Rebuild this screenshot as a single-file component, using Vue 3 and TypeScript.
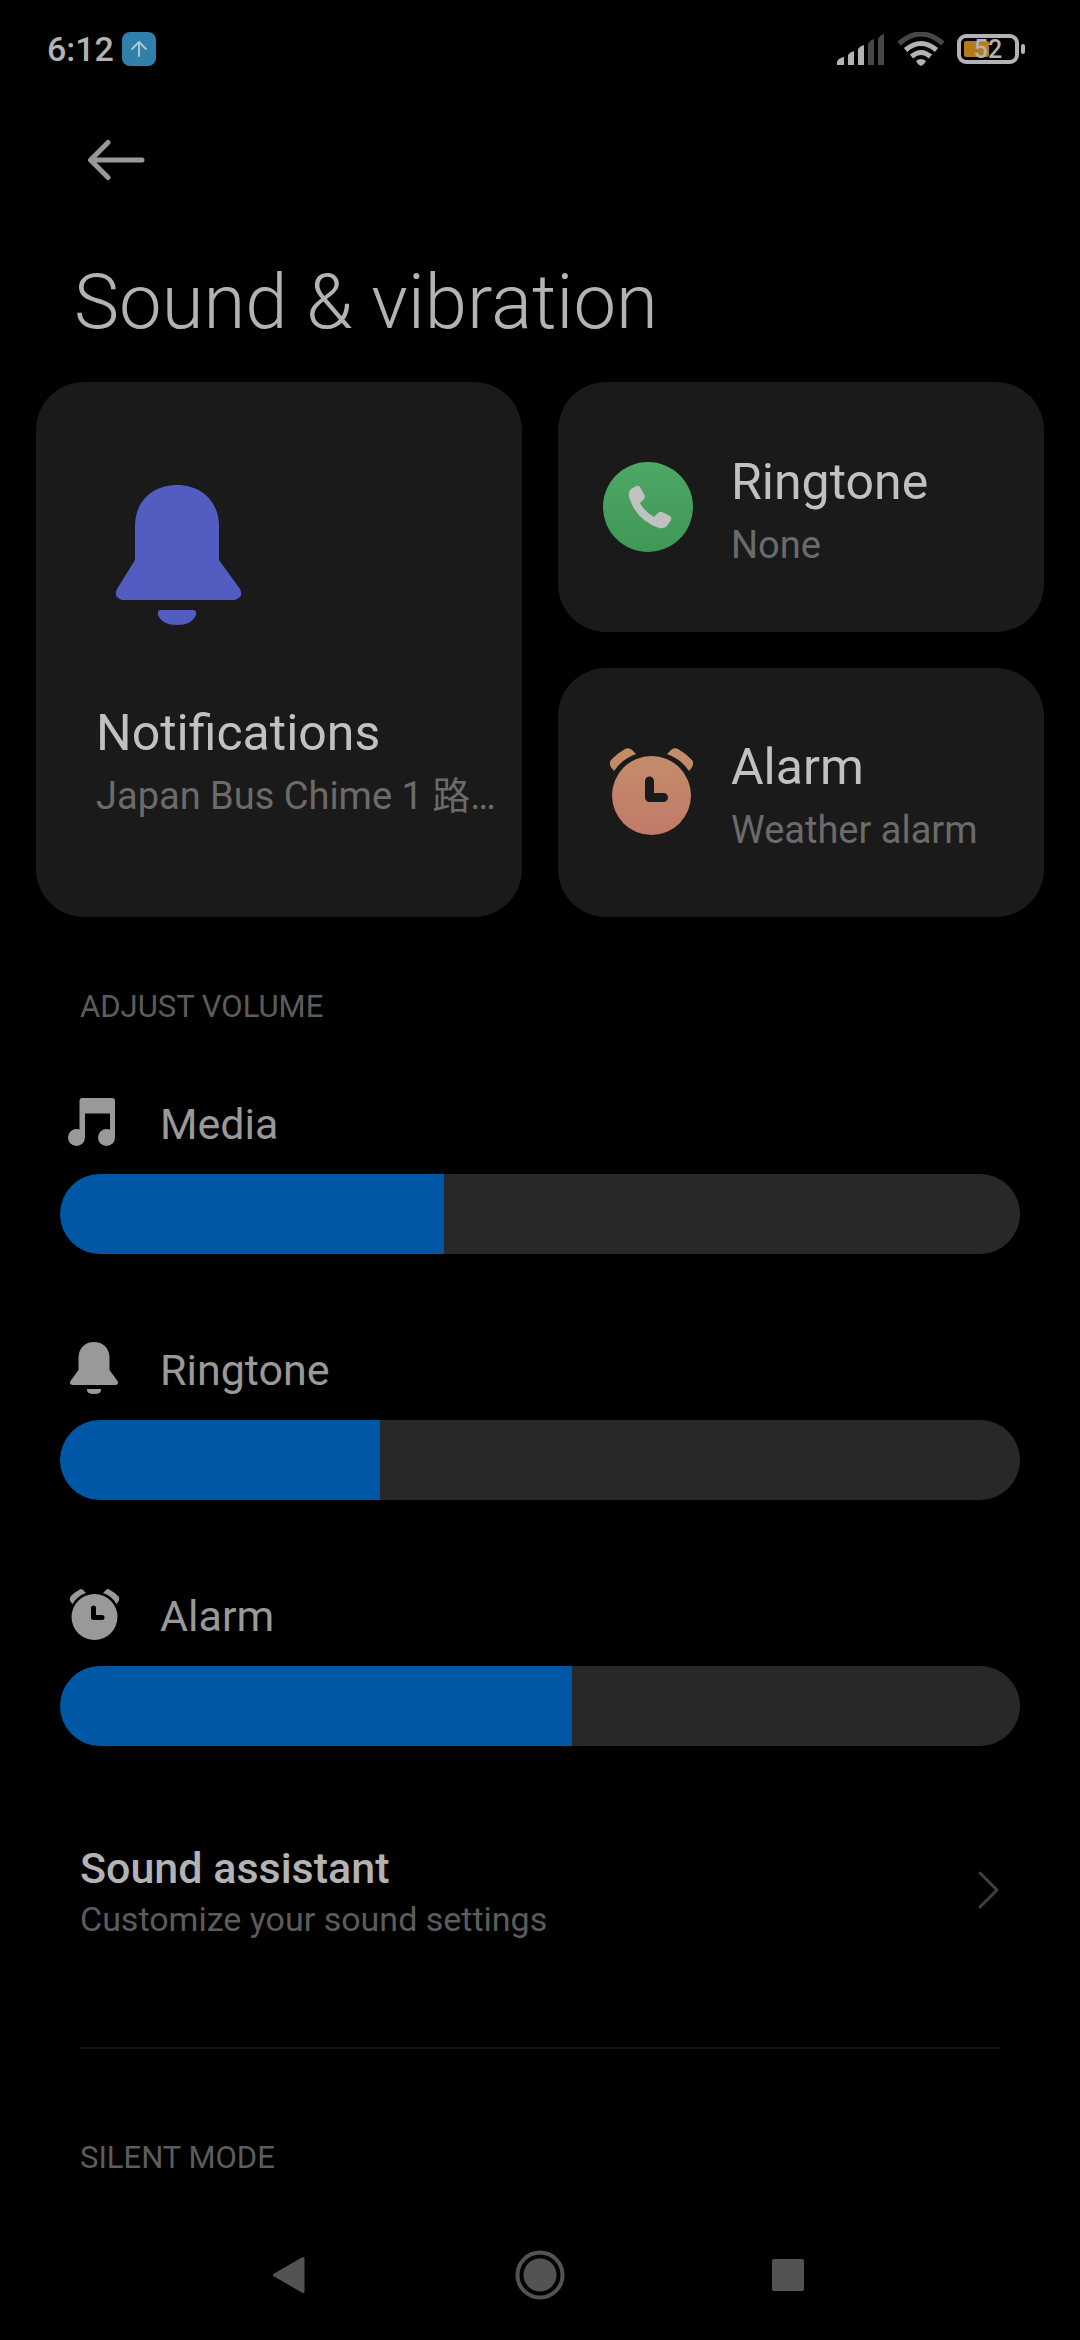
<script setup lang="ts">
import { ref } from 'vue'

type IconName = 'music' | 'bell' | 'clock'

interface Volume {
  id: string
  label: string
  icon: IconName
  level: number
}

const MAX_LEVEL = 15

const volumes = ref<Volume[]>([
  { id: 'media', label: 'Media', icon: 'music', level: 6 },
  { id: 'ringtone', label: 'Ringtone', icon: 'bell', level: 5 },
  { id: 'alarm', label: 'Alarm', icon: 'clock', level: 8 },
])

const fill = (level: number): string => `${(level / MAX_LEVEL) * 100}%`
</script>

<template>
  <div class="screen">
    <header class="status">
      <div class="status-side">
        <time class="clock">6:12</time>
        <svg class="upload" viewBox="0 0 34 34" aria-hidden="true">
          <rect width="34" height="34" rx="8" fill="#2f80ab" />
          <path d="M17 24V10M10 17l7-7 7 7" fill="none" stroke="#b4c4cd" stroke-width="2" stroke-linecap="round" stroke-linejoin="round" />
        </svg>
      </div>
      <div class="status-side status-right">
        <svg class="signal" viewBox="0 0 48 34" aria-hidden="true">
          <g fill="#b3b3b3">
            <path d="M0 33v-3q1-4 7-5v8z" />
            <path d="M11 33V23q2-3 6-4v14z" />
            <path d="M21 33V17q2-3 6-4v20z" />
          </g>
          <g fill="#474747">
            <path d="M31 33V12q2-4 6-5v26z" />
            <path d="M41 33V7q2-4 6-5v31z" />
          </g>
        </svg>
        <svg class="wifi" viewBox="0 0 48 34" aria-hidden="true">
          <path d="M2 11.500Q24-7.500 46 11.500" fill="none" stroke="#474747" stroke-width="5" />
          <g fill="none" stroke="#b3b3b3" stroke-width="5">
            <path d="M8.500 18Q24 5 39.500 18" />
            <path d="M14.500 24.500Q24 16.500 33.500 24.500" />
          </g>
          <path d="M19 29q5-4 10 0-1 3-5 5-4-2-5-5z" fill="#b3b3b3" />
        </svg>
        <div class="battery">
          <svg viewBox="0 0 68 30" aria-hidden="true">
            <rect x="7" y="7" width="25" height="16" rx="2" fill="#b37b1c" />
            <rect x="2" y="2" width="58" height="26" rx="7" fill="none" stroke="#b3b3b3" stroke-width="4" />
            <rect x="64" y="10" width="4" height="10" rx="2" fill="#b3b3b3" />
          </svg>
          <span class="battery-text">52</span>
        </div>
      </div>
    </header>

    <main class="content">
      <div class="toolbar">
        <button class="back" type="button" aria-label="Back">
          <svg viewBox="0 0 60 44" aria-hidden="true">
            <path d="M55 22H4M21 4.500L3.500 22 21 39.500" fill="none" stroke="#999" stroke-width="5" stroke-linecap="round" stroke-linejoin="round" />
          </svg>
        </button>
      </div>

      <h1 class="title">Sound &amp; vibration</h1>

      <section class="cards">
        <button class="card card-tall" type="button">
          <svg class="bell-large" viewBox="0 0 165 165" aria-hidden="true">
            <path d="M39 98V64C39 39 57 23 81 23s42 16 42 41v34l21 29q4 8-5 11H26q-9-3-5-11z" fill="#535cc0" />
            <path d="M65 148h32q4 0 3 5-4 10-19 10T62 153q-1-5 3-5z" fill="#535cc0" />
          </svg>
          <span class="card-text">
            <span class="card-title">Notifications</span>
            <span class="card-sub">Japan Bus Chime 1 路…</span>
          </span>
        </button>

        <button class="card card-wide" type="button">
          <svg class="card-icon" viewBox="0 0 90 90" aria-hidden="true">
            <defs>
              <linearGradient id="call" x1="0" y1="0" x2="0" y2="1">
                <stop offset="0" stop-color="#4da765" />
                <stop offset="1" stop-color="#3f9855" />
              </linearGradient>
            </defs>
            <circle cx="45" cy="45" r="45" fill="url(#call)" />
            <path d="M28 27l5-3q3-1 4 1l5 9q0 2-1 3l-4 4q5 9 14 14l4-4q2-2 4-1l8 4q2 2 1 4l-4 6q-3 3-8 2Q33 58 26 35q-1-6 2-8z" fill="#c1c1c1" />
          </svg>
          <span class="card-text">
            <span class="card-title">Ringtone</span>
            <span class="card-sub">None</span>
          </span>
        </button>

        <button class="card card-wide" type="button">
          <svg class="card-icon" viewBox="0 0 90 90" aria-hidden="true">
            <defs>
              <linearGradient id="wake" gradientUnits="userSpaceOnUse" x1="0" y1="2" x2="0" y2="88">
                <stop offset="0" stop-color="#c48d69" />
                <stop offset="1" stop-color="#c17a69" />
              </linearGradient>
            </defs>
            <g fill="url(#wake)">
              <circle cx="48.500" cy="48.500" r="39.500" />
              <path d="M9 12Q15 6 22 2q4-2 7 1l4 4Q19 12 11 24 6 19 7 15q0-1 2-3z" />
              <path d="M88 12Q82 6 75 2q-4-2-7 1l-4 4q14 5 22 17 5-5 4-9 0-1-2-3z" />
            </g>
            <path d="M46.500 34v16.500h14" fill="none" stroke="#1a1a1a" stroke-width="9" stroke-linecap="round" stroke-linejoin="round" />
          </svg>
          <span class="card-text">
            <span class="card-title">Alarm</span>
            <span class="card-sub">Weather alarm</span>
          </span>
        </button>
      </section>

      <section class="volume">
        <h2 class="section-title">ADJUST VOLUME</h2>
        <div class="sliders">
          <div v-for="item in volumes" :key="item.id" class="slider">
            <label class="slider-label" :for="item.id">
              <svg v-if="item.icon === 'music'" viewBox="0 0 60 60" aria-hidden="true">
                <g fill="#999">
                  <path d="M15.500 43V7q0-3 3-3H48q3 0 3 3v36h-5V19.500H21V43z" />
                  <circle cx="12.500" cy="43.500" r="8.500" />
                  <circle cx="42.500" cy="43.500" r="8.500" />
                </g>
              </svg>
              <svg v-else-if="item.icon === 'bell'" viewBox="0 0 60 60" aria-hidden="true">
                <g fill="#999">
                  <path d="M14.500 30V18C14.500 8 21 2 30 2s15.500 6 15.500 16v12l8 11q2 3-2 4h-43q-4-1-2-4z" />
                  <path d="M23 49h14q1 5-7 5t-7-5z" />
                </g>
              </svg>
              <svg v-else viewBox="0 0 60 60" aria-hidden="true">
                <g fill="#999">
                  <circle cx="30.500" cy="31" r="23" />
                  <path d="M7 10q4-4 8-6 2-2 4 0l3 3Q13 10 8.500 18 5 14 6 12q0-1 1-2z" />
                  <path d="M54 10q-4-4-8-6-2-2-4 0l-3 3q9 3 13.500 11 3.500-4 2.500-6 0-1-1-2z" />
                </g>
                <path d="M29.500 22v9.500H38" fill="none" stroke="#000" stroke-width="5" stroke-linecap="round" stroke-linejoin="round" />
              </svg>
              <span>{{ item.label }}</span>
            </label>
            <input
              :id="item.id"
              v-model.number="item.level"
              class="range"
              type="range"
              min="0"
              :max="MAX_LEVEL"
              :style="{ '--fill': fill(item.level) }"
            />
          </div>
        </div>
      </section>

      <a class="assistant" href="#sound-assistant">
        <span class="assistant-text">
          <span class="assistant-title">Sound assistant</span>
          <span class="assistant-sub">Customize your sound settings</span>
        </span>
        <svg viewBox="0 0 24 40" aria-hidden="true">
          <path d="M4 2l17 17L4 36" fill="none" stroke="#404040" stroke-width="3" stroke-linecap="round" stroke-linejoin="round" />
        </svg>
      </a>

      <hr class="divider" />

      <section class="silent">
        <h2 class="section-title">SILENT MODE</h2>
      </section>
    </main>

    <nav class="nav" aria-label="System navigation">
      <button type="button" aria-label="Back">
        <svg viewBox="0 0 50 50" aria-hidden="true">
          <path d="M36 8.500v33L7.500 25z" fill="#535353" stroke="#535353" stroke-width="3" stroke-linejoin="round" />
        </svg>
      </button>
      <button type="button" aria-label="Home">
        <svg viewBox="0 0 50 50" aria-hidden="true">
          <circle cx="25" cy="25" r="22.500" fill="none" stroke="#535353" stroke-width="4" />
          <circle cx="25" cy="25" r="16.500" fill="#535353" />
        </svg>
      </button>
      <button type="button" aria-label="Recent apps">
        <svg viewBox="0 0 50 50" aria-hidden="true">
          <rect x="9" y="9" width="32" height="32" rx="2" fill="#535353" />
        </svg>
      </button>
    </nav>
  </div>
</template>

<style>
body {
  margin: 0;
  background: #000;
}
</style>

<style scoped>
.screen {
  display: flex;
  flex-direction: column;
  min-height: 100vh;
  background: #000;
  color: #b3b3b3;
  font-family: Roboto, "Noto Sans CJK JP", sans-serif;
}

svg {
  display: block;
  flex: none;
}

button {
  padding: 0;
  border: 0;
  background: none;
  color: inherit;
  font: inherit;
  text-align: left;
}

.status {
  display: flex;
  justify-content: space-between;
  align-items: center;
  height: 98px;
  padding: 0 55px 0 47px;
}

.status-side {
  display: flex;
  align-items: center;
  gap: 8px;
}

.status-right {
  gap: 12px;
}

.clock {
  font-size: 34px;
  font-weight: 500;
  line-height: 40px;
}

.upload {
  width: 34px;
  height: 34px;
}

.signal,
.wifi {
  width: 48px;
  height: 34px;
}

.battery {
  position: relative;
}

.battery svg {
  width: 68px;
  height: 30px;
}

.battery-text {
  position: absolute;
  inset: 0 6px 0 0;
  font-size: 25px;
  font-weight: 500;
  line-height: 32px;
  text-align: center;
}

.content {
  display: flex;
  flex-direction: column;
}

.toolbar {
  display: flex;
  align-items: center;
  height: 124px;
  padding: 0 87px;
}

.back svg {
  width: 60px;
  height: 44px;
}

.title {
  margin: 0;
  padding: 30px 74px;
  font-size: 76px;
  font-weight: 300;
  line-height: 100px;
}

.cards {
  display: grid;
  grid-template-columns: 1fr 1fr;
  grid-template-rows: 1fr 1fr;
  gap: 36px;
  min-height: 535px;
  padding: 0 36px;
}

.card {
  display: flex;
  min-width: 0;
  border-radius: 48px;
  background: #1a1a1a;
}

.card-tall {
  grid-row: span 2;
  flex-direction: column;
  gap: 76px;
  padding: 80px 24px 80px 60px;
}

.card-wide {
  align-items: center;
  gap: 38px;
  padding: 0 45px;
}

.card-wide .card-text {
  padding-top: 8px;
}

.bell-large {
  width: 165px;
  height: 165px;
}

.card-icon {
  width: 90px;
  height: 90px;
}

.card-text {
  display: flex;
  flex-direction: column;
  gap: 8px;
  white-space: nowrap;
}

.card-title {
  color: #c1c1c1;
  font-size: 50px;
  line-height: 60px;
}

.card-sub {
  color: #6b6b6b;
  font-size: 38px;
  line-height: 50px;
}

.section-title {
  margin: 0;
  padding: 0 80px;
  color: #5c5c5c;
  font-size: 31px;
  font-weight: 400;
  line-height: 40px;
}

.volume {
  padding-top: 70px;
}

.sliders {
  display: flex;
  flex-direction: column;
  gap: 86px;
  padding: 67px 60px 0;
}

.slider {
  display: flex;
  flex-direction: column;
  gap: 20px;
}

.slider-label {
  display: flex;
  align-items: center;
  gap: 36px;
  padding-left: 4px;
  color: #999;
  font-size: 43px;
  line-height: 60px;
}

.slider-label svg {
  width: 60px;
  height: 60px;
}

.range {
  appearance: none;
  display: block;
  width: 100%;
  height: 80px;
  margin: 0;
  border-radius: 40px;
  background: linear-gradient(to right, #0057a6 var(--fill), #282828 var(--fill));
}

.range::-webkit-slider-thumb {
  appearance: none;
  width: 1px;
  height: 80px;
  opacity: 0;
}

.assistant {
  display: flex;
  justify-content: space-between;
  align-items: center;
  padding: 94px 80px 105px;
  color: inherit;
  text-decoration: none;
}

.assistant svg {
  width: 24px;
  height: 40px;
}

.assistant-text {
  display: flex;
  flex-direction: column;
}

.assistant-title {
  font-size: 43px;
  font-weight: 500;
  line-height: 56px;
}

.assistant-sub {
  color: #5c5c5c;
  font-size: 34px;
  line-height: 46px;
}

.divider {
  width: auto;
  height: 2px;
  margin: 0 80px;
  border: 0;
  background: #141414;
}

.silent {
  padding-top: 89px;
}

.nav {
  display: flex;
  justify-content: center;
  align-items: center;
  gap: 198px;
  height: 130px;
  margin-top: auto;
}

.nav svg {
  width: 50px;
  height: 50px;
}
</style>
